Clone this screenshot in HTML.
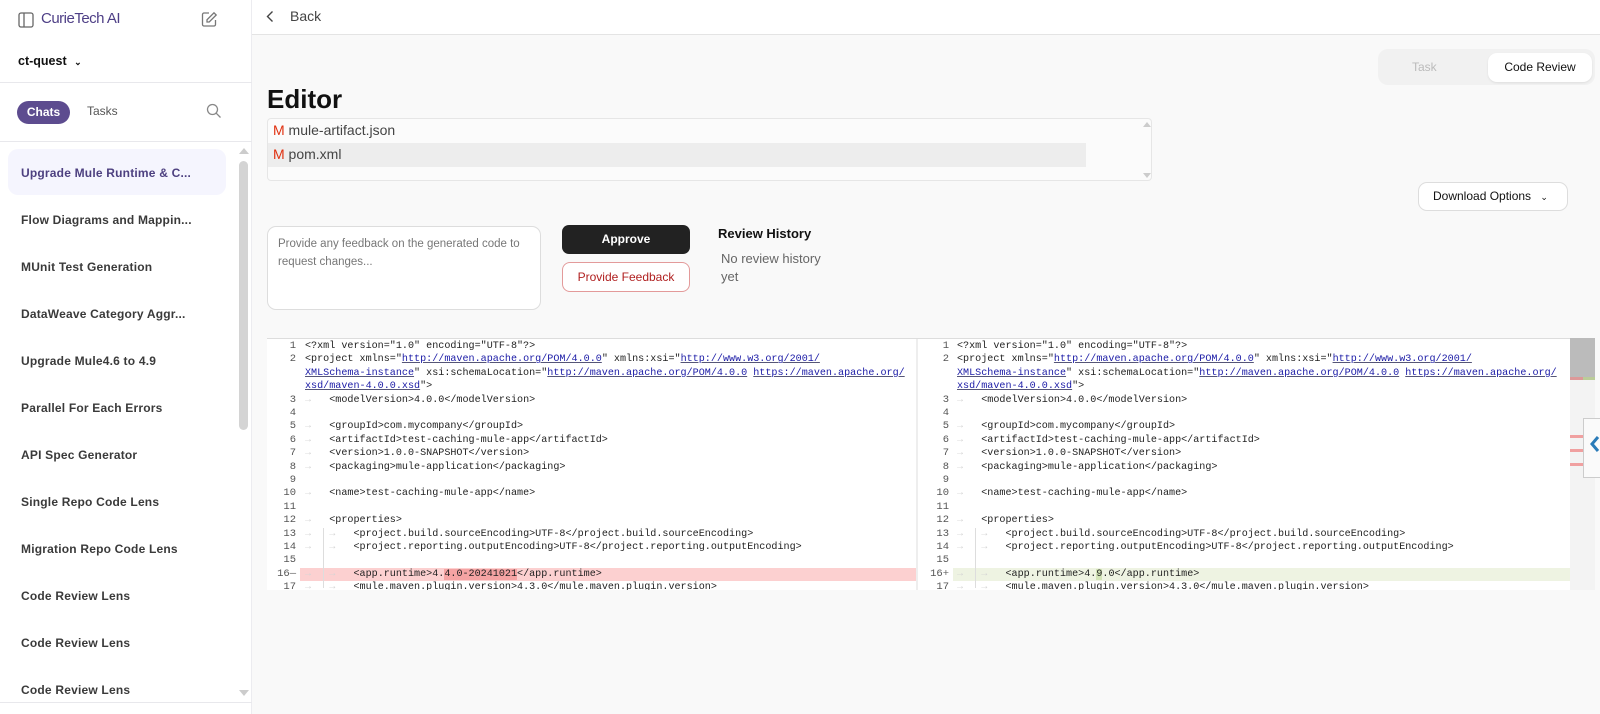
<!DOCTYPE html>
<html><head><meta charset="utf-8"><style>
*{box-sizing:border-box;margin:0;padding:0}
body{width:1600px;height:714px;overflow:hidden;background:#f9f9f9;font-family:"Liberation Sans",sans-serif;position:relative;color:#222}
.abs{position:absolute}
#sb{left:0;top:0;width:252px;height:714px;background:#fff;border-right:1px solid #ececf0}
.item{position:absolute;left:21px;font-size:12px;font-weight:bold;color:#3a3a3a;letter-spacing:.2px}
.code{font-family:"Liberation Mono",monospace;font-size:10.1px;line-height:13.4px;color:#222;white-space:pre}
.ln{position:absolute;text-align:right;color:#555;font-family:"Liberation Mono",monospace;font-size:10.5px}
.row{position:absolute;height:13.4px;white-space:pre}
a{color:#1a1aa6;text-decoration:underline;text-decoration-color:#557}
.t{color:#d4d4d4}
</style></head><body>
<div id="sb" class="abs">
  <svg class="abs" style="left:18px;top:12px" width="16" height="16" viewBox="0 0 16 16"><rect x="1" y="1" width="14" height="14" rx="2" fill="none" stroke="#666" stroke-width="1.3"/><line x1="6" y1="1" x2="6" y2="15" stroke="#666" stroke-width="1.3"/></svg>
  <div class="abs" style="left:41px;top:10px;font-size:15px;color:#4e3f86;letter-spacing:-.5px">CurieTech AI</div>
  <svg class="abs" style="left:201px;top:11px" width="17" height="17" viewBox="0 0 17 17"><path d="M8 2H3a1.5 1.5 0 0 0-1.5 1.5v10A1.5 1.5 0 0 0 3 15h10a1.5 1.5 0 0 0 1.5-1.5V9" fill="none" stroke="#777" stroke-width="1.3"/><path d="M13 1.8l2.2 2.2-7 7H6V8.8z" fill="none" stroke="#777" stroke-width="1.3"/></svg>
  <div class="abs" style="left:18px;top:54px;font-size:12.5px;font-weight:bold;color:#111">ct-quest <span style="font-size:9px;margin-left:4px">&#8964;</span></div>
  <div class="abs" style="left:0;top:82px;width:252px;height:1px;background:#e8e8ec"></div>
  <div class="abs" style="left:17px;top:101px;width:53px;height:23px;border-radius:12px;background:#5d4c8f;color:#fff;font-size:12px;font-weight:bold;text-align:center;line-height:23px">Chats</div>
  <div class="abs" style="left:87px;top:104px;font-size:12px;color:#555">Tasks</div>
  <svg class="abs" style="left:206px;top:103px" width="16" height="16" viewBox="0 0 16 16"><circle cx="6.5" cy="6.5" r="5" fill="none" stroke="#888" stroke-width="1.3"/><line x1="10.2" y1="10.2" x2="14.5" y2="14.5" stroke="#888" stroke-width="1.3"/></svg>
  <div class="abs" style="left:0;top:141px;width:252px;height:1px;background:#e8e8ec"></div>
  <div class="abs" style="left:8px;top:149px;width:218px;height:46px;border-radius:10px;background:#f5f5fe"></div>
  <div class="item" style="top:166px;color:#4d4080">Upgrade Mule Runtime &amp; C...</div>
  <div class="item" style="top:213px">Flow Diagrams and Mappin...</div>
  <div class="item" style="top:260px">MUnit Test Generation</div>
  <div class="item" style="top:307px">DataWeave Category Aggr...</div>
  <div class="item" style="top:354px">Upgrade Mule4.6 to 4.9</div>
  <div class="item" style="top:401px">Parallel For Each Errors</div>
  <div class="item" style="top:448px">API Spec Generator</div>
  <div class="item" style="top:495px">Single Repo Code Lens</div>
  <div class="item" style="top:542px">Migration Repo Code Lens</div>
  <div class="item" style="top:589px">Code Review Lens</div>
  <div class="item" style="top:636px">Code Review Lens</div>
  <div class="item" style="top:683px">Code Review Lens</div>
  <div class="abs" style="left:239px;top:148px;width:0;height:0;border-left:5px solid transparent;border-right:5px solid transparent;border-bottom:6px solid #ccc"></div>
  <div class="abs" style="left:239px;top:161px;width:9px;height:269px;border-radius:5px;background:#d4d4d4"></div>
  <div class="abs" style="left:239px;top:690px;width:0;height:0;border-left:5px solid transparent;border-right:5px solid transparent;border-top:6px solid #ccc"></div>
  <div class="abs" style="left:0;top:702px;width:252px;height:1px;background:#e8e8ec"></div>
</div>
<div class="abs" style="left:252px;top:0;width:1348px;height:35px;background:#fff;border-bottom:1px solid #e4e4e4"></div>
<svg class="abs" style="left:265px;top:10px" width="10" height="13" viewBox="0 0 10 13"><path d="M7.5 1.5L2.5 6.5l5 5" fill="none" stroke="#444" stroke-width="1.4"/></svg>
<div class="abs" style="left:290px;top:8px;font-size:14px;color:#444">Back</div>
<div class="abs" style="left:1378px;top:49px;width:217px;height:36px;border-radius:10px;background:#f1f1f1"></div>
<div class="abs" style="left:1412px;top:60px;font-size:12px;color:#bbb">Task</div>
<div class="abs" style="left:1488px;top:53px;width:104px;height:29px;border-radius:9px;background:#fff;box-shadow:0 1px 2px rgba(0,0,0,.08);font-size:12px;color:#111;text-align:center;line-height:29px">Code Review</div>
<div class="abs" style="left:267px;top:84px;font-size:26px;font-weight:bold;color:#111">Editor</div>
<div class="abs" style="left:267px;top:118px;width:885px;height:63px;border:1px solid #e6e6e6;border-radius:4px;background:#fbfbfb"></div>
<div class="abs" style="left:268px;top:143px;width:818px;height:24px;background:#ededed"></div>
<div class="abs" style="left:273px;top:122px;font-size:14px;color:#444"><span style="color:#e0300f">M</span> mule-artifact.json</div>
<div class="abs" style="left:273px;top:146px;font-size:14px;color:#444"><span style="color:#e0300f">M</span> pom.xml</div>
<div class="abs" style="left:1143px;top:122px;border-left:4px solid transparent;border-right:4px solid transparent;border-bottom:5px solid #ccc"></div>
<div class="abs" style="left:1143px;top:173px;border-left:4px solid transparent;border-right:4px solid transparent;border-top:5px solid #ccc"></div>
<div class="abs" style="left:1418px;top:182px;width:150px;height:29px;border:1px solid #ddd;border-radius:9px;background:#fff;font-size:12px;color:#111;line-height:27px;padding-left:14px">Download Options <span style="font-size:9px;margin-left:6px">&#8964;</span></div>
<div class="abs" style="left:267px;top:226px;width:274px;height:84px;border:1px solid #ddd;border-radius:9px;background:#fff;padding:8px 10px;font-size:11.5px;line-height:18px;color:#777">Provide any feedback on the generated code to request changes...</div>
<div class="abs" style="left:562px;top:225px;width:128px;height:29px;border-radius:7px;background:#222;color:#fff;font-size:12px;font-weight:bold;text-align:center;line-height:29px">Approve</div>
<div class="abs" style="left:562px;top:262px;width:128px;height:30px;border-radius:8px;border:1px solid #e39a9a;background:#fff;color:#b02020;font-size:12px;text-align:center;line-height:28px">Provide Feedback</div>
<div class="abs" style="left:718px;top:226px;font-size:13px;font-weight:bold;color:#111">Review History</div>
<div class="abs" style="left:721px;top:250px;font-size:13px;line-height:18px;color:#666;width:120px">No review history yet</div>
<div class="abs" style="left:267px;top:338px;width:1303px;height:252px;background:#fff;border-top:1px solid #ddd;overflow:hidden">
<div id="L" class="abs" style="left:0;top:0;width:649px;height:252px;overflow:hidden"></div>
<div class="abs" style="left:649px;top:0;width:2px;height:252px;background:#eee"></div>
<div id="R" class="abs" style="left:651px;top:0;width:652px;height:252px;overflow:hidden"></div>
</div>
<div class="abs" style="left:1570px;top:338px;width:25px;height:252px;background:#f3f3f3"></div>
<div class="abs" style="left:1570px;top:338px;width:25px;height:39px;background:#bbb"></div>
<div class="abs" style="left:1570px;top:377px;width:13px;height:3px;background:#d99"></div>
<div class="abs" style="left:1583px;top:377px;width:12px;height:3px;background:#bc9"></div>
<div class="abs" style="left:1570px;top:435px;width:14px;height:3px;background:#f0a0a0"></div>
<div class="abs" style="left:1570px;top:449px;width:14px;height:3px;background:#f0a0a0"></div>
<div class="abs" style="left:1570px;top:463px;width:14px;height:3px;background:#f0a0a0"></div>
<div class="abs" style="left:1583px;top:418px;width:20px;height:60px;background:#fafafa;border:1px solid #ccc;border-right:none"></div>
<svg class="abs" style="left:1589px;top:435px" width="11" height="18" viewBox="0 0 11 18"><path d="M9 2L3 9l6 7" fill="none" stroke="#2a7bb8" stroke-width="3"/></svg>
<script>
var T='<span class="t">→</span>   ';
var rowsL=[
 ['1','&lt;?xml version="1.0" encoding="UTF-8"?&gt;'],
 ['2','&lt;project xmlns="<a>http://maven.apache.org/POM/4.0.0</a>" xmlns:xsi="<a>http://www.w3.org/2001/</a>'],
 ['','<a>XMLSchema-instance</a>" xsi:schemaLocation="<a>http://maven.apache.org/POM/4.0.0</a> <a>https://maven.apache.org/</a>'],
 ['','<a>xsd/maven-4.0.0.xsd</a>"&gt;'],
 ['3',T+'&lt;modelVersion&gt;4.0.0&lt;/modelVersion&gt;'],
 ['4',''],
 ['5',T+'&lt;groupId&gt;com.mycompany&lt;/groupId&gt;'],
 ['6',T+'&lt;artifactId&gt;test-caching-mule-app&lt;/artifactId&gt;'],
 ['7',T+'&lt;version&gt;1.0.0-SNAPSHOT&lt;/version&gt;'],
 ['8',T+'&lt;packaging&gt;mule-application&lt;/packaging&gt;'],
 ['9',''],
 ['10',T+'&lt;name&gt;test-caching-mule-app&lt;/name&gt;'],
 ['11',''],
 ['12',T+'&lt;properties&gt;'],
 ['13',T+T+'&lt;project.build.sourceEncoding&gt;UTF-8&lt;/project.build.sourceEncoding&gt;'],
 ['14',T+T+'&lt;project.reporting.outputEncoding&gt;UTF-8&lt;/project.reporting.outputEncoding&gt;'],
 ['15',''],
 ['16',null],
 ['17',T+T+'&lt;mule.maven.plugin.version&gt;4.3.0&lt;/mule.maven.plugin.version&gt;']
];
function build(id,numRight,codeX,side){
 var h='';
 rowsL.forEach(function(r,i){
  var top=1+i*13.4;
  var c=r[1];
  if(r[0]==='16'){
   if(side==='L'){c=T+T+'&lt;app.runtime&gt;4.<span style="background:#f5a3a3">4.0-20241021</span>&lt;/app.runtime&gt;';
    h+='<div class="row" style="left:'+(numRight+4)+'px;top:'+top+'px;right:0;background:#fcd0d0"></div>';}
   else{c=T+T+'&lt;app.runtime&gt;4.<span style="background:#d3e4b8">9</span>.0&lt;/app.runtime&gt;';
    h+='<div class="row" style="left:'+(numRight+4)+'px;top:'+top+'px;right:0;background:#eef3e2"></div>';}
  }
  if(r[0]) h+='<div class="ln" style="left:0;width:'+numRight+'px;top:'+top+'px;line-height:13.4px">'+r[0]+(r[0]==='16'?'<span style="color:#666">'+(side==='L'?'—':'+')+'</span>':'')+'</div>';
  h+='<div class="row code" style="left:'+codeX+'px;top:'+top+'px">'+c+'</div>';
 });
 h+='<div class="abs" style="left:'+(codeX+18)+'px;top:'+(1+14*13.4)+'px;width:1px;height:60px;background:#ddd"></div>';
 document.getElementById(id).innerHTML=h;
}
build('L',29,38,'L');
build('R',31,39,'R');
</script>
</body></html>
